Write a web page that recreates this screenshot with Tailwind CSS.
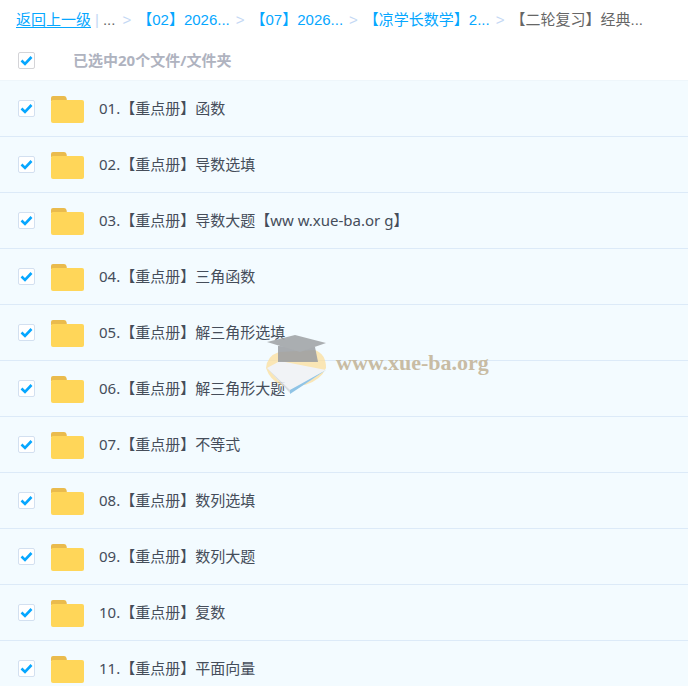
<!DOCTYPE html>
<html lang="zh">
<head>
    <meta charset="UTF-8">
    <title>文件列表</title>
    <script src="https://cdn.jsdelivr.net/npm/@tailwindcss/browser@4"></script>
</head>
<body class="bg-white overflow-hidden font-['Liberation_Sans','Noto_Sans_CJK_SC',sans-serif]">
<div class="relative w-[688px] h-[686px] overflow-hidden">
    <!-- breadcrumb -->
    <div class="h-10 pl-4 flex items-center text-[15px] whitespace-nowrap text-[#06a7ff]">
        <a class="underline underline-offset-2">返回上一级</a>
        <span class="ml-1 text-[#c4d8f4]">|</span>
        <span class="ml-1 text-[#666]">...</span>
        <span class="ml-[7px] text-[#c4d8f4]">&gt;</span>
        <span class="ml-[6px]">【02】2026...</span>
        <span class="ml-[6px] text-[#c4d8f4]">&gt;</span>
        <span class="ml-[6px]">【07】2026...</span>
        <span class="ml-[6px] text-[#c4d8f4]">&gt;</span>
        <span class="ml-[6px]">【凉学长数学】2...</span>
        <span class="ml-[6px] text-[#c4d8f4]">&gt;</span>
        <span class="ml-[6px] text-[#666]">【二轮复习】经典...</span>
    </div>
    <!-- select all -->
    <div class="h-[41px] pl-[18px] flex items-center border-b border-[#eef6fb]">
        <span class="w-[17px] h-[17px] bg-white border border-[#d4d4d8] rounded-[2px] flex items-center justify-center">
            <svg width="13" height="11" viewBox="0 0 13 11"><path d="M1.5 5.5 L5 9 L11.5 2" fill="none" stroke="#06a7ff" stroke-width="2.6"/></svg>
        </span>
        <span class="ml-[38px] text-[15px] font-bold text-[#afb3bf] font-['Noto_Sans','Noto_Sans_CJK_SC',sans-serif]">已选中20个文件/文件夹</span>
    </div>
    <!-- list -->
    <ul id="list" class="bg-[#f3fbff] text-[15px] text-[#454d5a] font-['Noto_Sans','Noto_Sans_CJK_SC',sans-serif]"></ul>
    <!-- watermark -->
    <div class="absolute left-[265px] top-[334px] flex items-center pointer-events-none">
        <svg class="opacity-90" width="62" height="62" viewBox="0 0 62 62">
            <path d="M1 34 Q2 22 14 18 L50 16 Q61 20 61 34 Q56 46 40 51 L16 51 Q5 46 1 34Z" fill="#fbdf9f" opacity=".85"/>
            <path d="M2 34 L15 27 L61 36 L25 59Z" fill="#f1f3f6"/>
            <path d="M2 34 L25 56 L50 44 L25 59Z" fill="#d5d9de"/>
            <path d="M25 56 L61 36 L25 60Z" fill="#86bfe4"/>
            <path d="M13 12 V28 H53 L50 13Z" fill="#8f9398" opacity=".85"/>
            <path d="M2 8 L30 1 L61 9 L35 18Z" fill="#a3a6a9"/>
        </svg>
        <span class="ml-[9px] -mt-[6px] text-[22px] font-bold text-[#c8bca4] font-['Liberation_Serif',serif]">www.xue-ba.org</span>
    </div>
</div>
<script>
    const names = ['01.【重点册】函数', '02.【重点册】导数选填', '03.【重点册】导数大题【ww w.xue-ba.or g】', '04.【重点册】三角函数', '05.【重点册】解三角形选填', '06.【重点册】解三角形大题', '07.【重点册】不等式', '08.【重点册】数列选填', '09.【重点册】数列大题', '10.【重点册】复数', '11.【重点册】平面向量'];
    document.getElementById('list').innerHTML = names.map(name => `
        <li class="h-14 pl-[18px] flex items-center border-b border-[#dceaf8]">
            <span class="w-[17px] h-[17px] bg-white border border-[#d3e0f0] rounded-[2px] flex items-center justify-center"><svg width="13" height="11" viewBox="0 0 13 11"><path d="M1.5 5.5 L5 9 L11.5 2" fill="none" stroke="#06a7ff" stroke-width="2.6"/></svg></span>
            <svg class="ml-4 mt-[2px]" width="33" height="27" viewBox="0 0 33 27"><path d="M0 2Q0 0 2 0H13Q15 0 15.500 2L16 5H0Z" fill="#eabb4d"/><rect y="4" width="33" height="23" rx="2" fill="#ffd659"/></svg>
            <span class="ml-[15px]">${name}</span>
        </li>`).join('');
</script>
</body>
</html>
